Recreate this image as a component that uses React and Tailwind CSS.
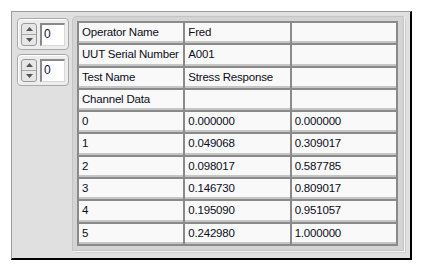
import React from "react";

const rows = [
    ["Operator Name", "Fred", ""],
    ["UUT Serial Number", "A001", ""],
    ["Test Name", "Stress Response", ""],
    ["Channel Data", "", ""],
    ["0", "0.000000", "0.000000"],
    ["1", "0.049068", "0.309017"],
    ["2", "0.098017", "0.587785"],
    ["3", "0.146730", "0.809017"],
    ["4", "0.195090", "0.951057"],
    ["5", "0.242980", "1.000000"],
];

const Spinner = () => (
    <div className="flex items-center gap-[3px] w-[52px] h-[32px] rounded-[4px] border border-[#a9a9a9] bg-[#ededed] pl-[3px] shadow-[inset_1px_1px_0_#ffffff]">
        <div className="flex flex-col w-[16px] h-[23px] rounded-[3px] border border-[#9a9a9a] bg-[#e6e6e6] overflow-hidden">
            <div className="flex-1 flex items-center justify-center border-b border-[#a8a8a8]">
                <svg width="7" height="4" viewBox="0 0 7 4">
                    <path d="M0 4 L3.5 0 L7 4 Z" fill="#555" />
                </svg>
            </div>
            <div className="flex-1 flex items-center justify-center">
                <svg width="7" height="4" viewBox="0 0 7 4">
                    <path d="M0 0 L3.5 4 L7 0 Z" fill="#555" />
                </svg>
            </div>
        </div>
        <div className="w-[25px] h-[23px] bg-white border-l-2 border-t-2 border-[#8a8a8a] border-r border-b border-r-[#d8d8d8] border-b-[#d8d8d8] text-[12px] leading-[19px] pl-[2px] text-[#101040]">
            0
        </div>
    </div>
);

export default function App() {
    return (
        <div className="w-[424px] h-[267px] bg-white pt-[11px] pl-[11px]" style={{ fontFamily: "Tahoma, 'Liberation Sans', sans-serif" }}>
            <div className="flex w-[401px] h-[249px] bg-[#e0e0e0] border-l border-t border-[#9c9c9c] border-r-2 border-b-2 border-r-black border-b-black pl-[5px] pt-[5px] gap-[3px]">
                <div className="flex flex-col gap-[4px] pt-[1px]">
                    <Spinner />
                    <Spinner />
                </div>
                <div className="w-[332px] h-[235px] -mt-[1px] rounded-tl-[5px] bg-[#d4d4d4] border border-[#c4c4c4] shadow-[1px_1px_0_#f4f4f4,2px_2px_0_#cfcfcf] pl-[4px] pt-[4px]">
                    <div className="grid grid-cols-3 grid-rows-[repeat(10,minmax(0,1fr))] w-[321px] h-[225px] bg-[#8a8a8a] gap-x-[2px] gap-y-[2px] p-[2px]">
                        {rows.map((r, i) =>
                            r.map((c, j) => (
                                <div
                                    key={i + "-" + j}
                                    className="bg-[#f9f9f9] border-b-2 border-[#c6c6c6] text-[11.5px] tracking-[-0.2px] leading-[18px] pl-[3px] text-[#0c0c1c] whitespace-nowrap overflow-hidden"
                                >
                                    {c}
                                </div>
                            ))
                        )}
                    </div>
                </div>
            </div>
        </div>
    );
}
